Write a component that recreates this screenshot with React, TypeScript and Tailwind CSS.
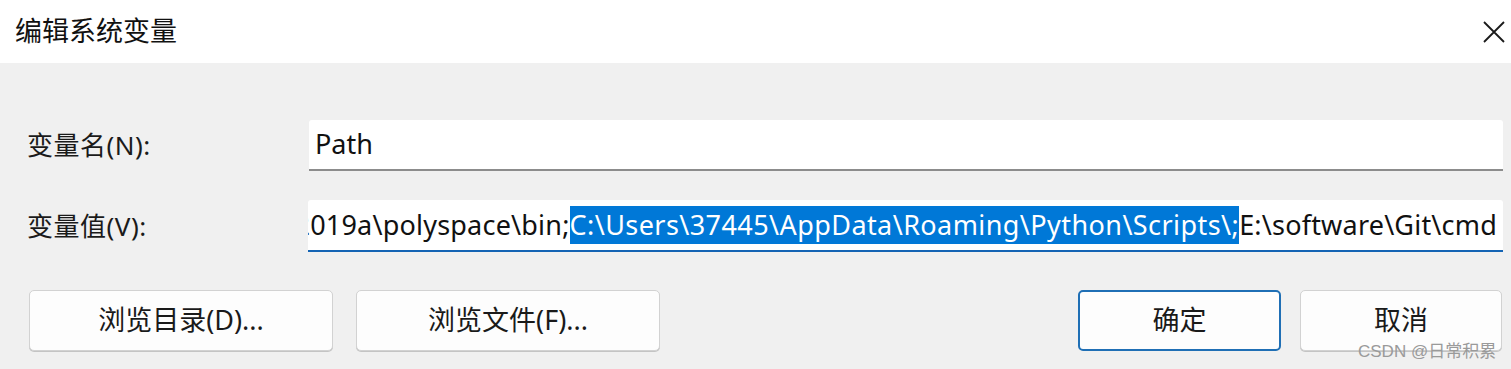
import React from 'react'

const font = "font-['Noto_Sans','Noto_Sans_CJK_SC',sans-serif]"

function Btn({ label, primary, w }: { label: string; primary?: boolean; w: string }) {
  return (
    <button
      className={`${w} h-[61px] rounded-[5px] bg-[#fdfdfd] text-[27px] text-[#1a1a1a] ${
        primary ? 'border-2 border-[#1f6fb5]' : 'border border-[#d2d2d2] shadow-[0_1px_0_#c4c4c4]'
      }`}
    >
      {label}
    </button>
  )
}

export default function App() {
  return (
    <div className={`relative w-[1511px] h-[369px] overflow-hidden bg-[#f0f0f0] ${font}`}>
      <div className="h-[63px] bg-white flex items-center justify-between pl-[15px] pr-[4px]">
        <span className="text-[27px] text-[#111]">编辑系统变量</span>
        <svg width="24" height="24" viewBox="0 0 24 24" className="mr-[1px]">
          <path d="M2 2 L22 22 M22 2 L2 22" stroke="#1a1a1a" strokeWidth="1.8" fill="none" />
        </svg>
      </div>

      <div className="pl-[27px] pr-[8px] pt-[57px]">
        <div className="flex items-center h-[51px]">
          <div className="w-[282px] text-[26px] tracking-[0.5px] text-[#1a1a1a]">变量名(N):</div>
          <div className="flex-1 h-full bg-white rounded-t-[3px] border-b-2 border-[#8c8c8c] flex items-center pl-[6px] text-[27px] text-[#111]">
            Path
          </div>
        </div>
        <div className="flex items-center h-[52px] mt-[29px]">
          <div className="w-[281px] text-[26px] tracking-[0.5px] text-[#1a1a1a]">变量值(V):</div>
          <div className="flex-1 h-full bg-white rounded-t-[3px] border-b-2 border-[#1464b4] flex items-center justify-end overflow-hidden pr-[6px] text-[27px] tracking-[0.2px] text-[#111] whitespace-nowrap">
            <span>{'R2019a\\polyspace\\bin;'}</span>
            <span className="bg-[#0078d7] text-white leading-[38px] tracking-[0.42px]">
              {'C:\\Users\\37445\\AppData\\Roaming\\Python\\Scripts\\;'}
            </span>
            <span>{'E:\\software\\Git\\cmd'}</span>
          </div>
        </div>
      </div>

      <div className="flex items-center mt-[38px] pl-[29px] pr-[9px]">
        <div className="flex gap-[23px]">
          <Btn label="浏览目录(D)..." w="w-[304px]" />
          <Btn label="浏览文件(F)..." w="w-[304px]" />
        </div>
        <div className="flex gap-[19px] ml-auto">
          <Btn label="确定" primary w="w-[203px]" />
          <Btn label="取消" w="w-[202px]" />
        </div>
      </div>

      <div className="absolute left-[1358px] top-[339px] text-[17px] text-[#9a9a9a] font-['Liberation_Sans','Noto_Sans_CJK_SC',sans-serif]">
        CSDN @日常积累
      </div>
    </div>
  )
}
